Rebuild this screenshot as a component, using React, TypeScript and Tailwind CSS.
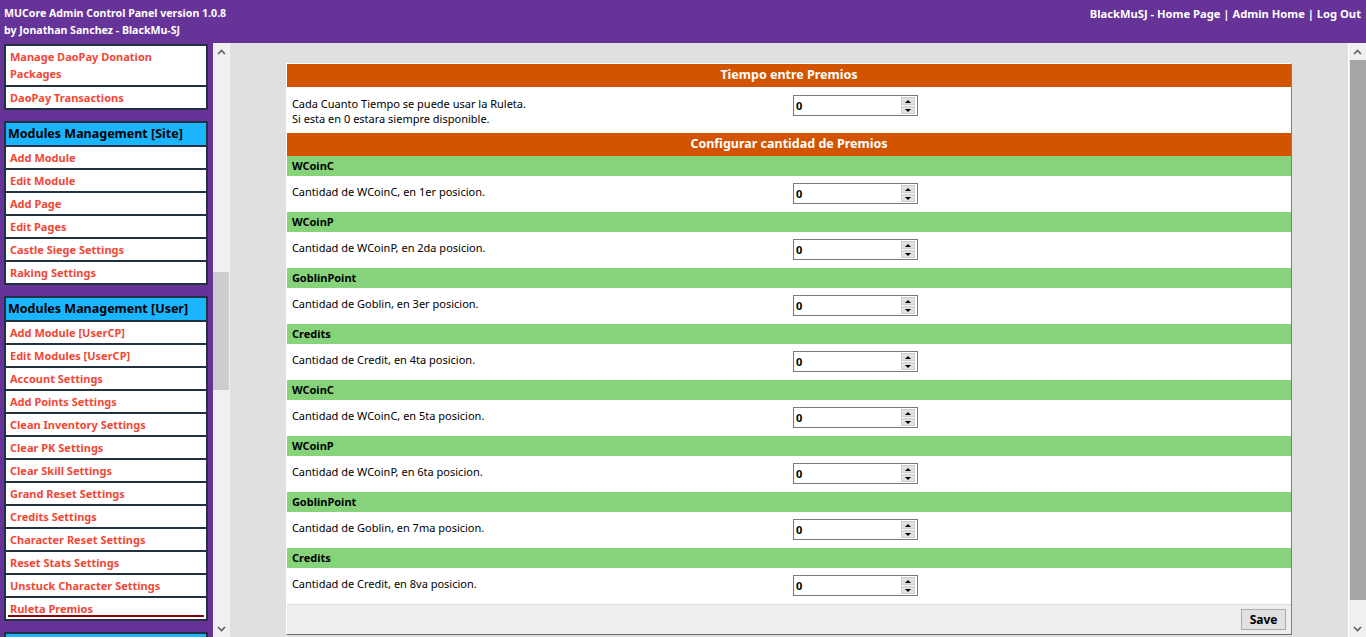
import React from "react";

const F = "font-['Noto_Sans',sans-serif]";

function Spinner() {
  return (
    <div className="w-[125px] h-[21px] border border-[#7a7a7a] bg-white flex items-center justify-between pl-[2px] pr-[2px]">
      <span className="text-[11px] font-bold text-black leading-none">0</span>
      <div className="flex flex-col gap-[1px] w-[14px] h-[17px]">
        <div className="flex-1 bg-[#e1e1e1] border border-[#cfcfcf] flex items-center justify-center">
          <div className="w-0 h-0 border-l-[3px] border-r-[3px] border-b-[3px] border-l-transparent border-r-transparent border-b-black" />
        </div>
        <div className="flex-1 bg-[#e1e1e1] border border-[#cfcfcf] flex items-center justify-center">
          <div className="w-0 h-0 border-l-[3px] border-r-[3px] border-t-[3px] border-l-transparent border-r-transparent border-t-black" />
        </div>
      </div>
    </div>
  );
}

function OrangeHead({ children }: { children: React.ReactNode }) {
  return (
    <div className="h-[23px] bg-[#d35400] text-white font-bold text-[12.5px] flex items-center justify-center">
      {children}
    </div>
  );
}

function Row({ label, tall }: { label: React.ReactNode; tall?: boolean }) {
  return (
    <div className={`bg-white flex items-start ${tall ? "h-[46px] pt-[8px]" : "h-[36px] pt-[7px]"}`}>
      <div className="w-1/2 pl-[5px] pt-[1px] text-[11px] leading-[15px] text-black">{label}</div>
      <div className="w-1/2 pl-[4px]">
        <Spinner />
      </div>
    </div>
  );
}

const prizes = [
  ["WCoinC", "Cantidad de WCoinC, en 1er posicion."],
  ["WCoinP", "Cantidad de WCoinP, en 2da posicion."],
  ["GoblinPoint", "Cantidad de Goblin, en 3er posicion."],
  ["Credits", "Cantidad de Credit, en 4ta posicion."],
  ["WCoinC", "Cantidad de WCoinC, en 5ta posicion."],
  ["WCoinP", "Cantidad de WCoinP, en 6ta posicion."],
  ["GoblinPoint", "Cantidad de Goblin, en 7ma posicion."],
  ["Credits", "Cantidad de Credit, en 8va posicion."],
];

const siteItems = ["Add Module", "Edit Module", "Add Page", "Edit Pages", "Castle Siege Settings", "Raking Settings"];
const userItems = [
  "Add Module [UserCP]",
  "Edit Modules [UserCP]",
  "Account Settings",
  "Add Points Settings",
  "Clean Inventory Settings",
  "Clear PK Settings",
  "Clear Skill Settings",
  "Grand Reset Settings",
  "Credits Settings",
  "Character Reset Settings",
  "Reset Stats Settings",
  "Unstuck Character Settings",
];

function Item({ children, extra }: { children: React.ReactNode; extra?: boolean }) {
  return (
    <div className={`bg-white px-[4px] pt-[2px] ${extra ? "pb-[3px]" : "pb-[2px]"} text-[11px] leading-[17px] font-bold text-[#ef4836]`}>
      {children}
    </div>
  );
}

function BoxHead({ children }: { children?: React.ReactNode }) {
  return (
    <div className="h-[22px] bg-[#19b5fe] px-[2px] flex items-center text-[12.5px] font-bold text-black">{children}</div>
  );
}

function ScrollArrow({ up }: { up?: boolean }) {
  return (
    <div className="h-[17px] flex items-center justify-center">
      <svg width="9" height="6" viewBox="0 0 9 6">
        <path d={up ? "M1 5 L4.5 1.5 L8 5" : "M1 1 L4.5 4.5 L8 1"} fill="none" stroke="#606060" strokeWidth="1.6" />
      </svg>
    </div>
  );
}

export default function App() {
  return (
    <div className={`w-[1366px] h-[637px] overflow-hidden flex flex-col ${F}`}>
      <div className="h-[43px] bg-[#663399] flex justify-between text-white font-bold leading-[17px] pl-[4px] pr-[5px] pt-[5px] shrink-0">
        <div className="text-[10.6px]">
          <div>MUCore Admin Control Panel version 1.0.8</div>
          <div>by Jonathan Sanchez - BlackMu-SJ</div>
        </div>
        <div className="text-[11.2px]">BlackMuSJ - Home Page | Admin Home | Log Out</div>
      </div>
      <div className="flex-1 flex min-h-0">
        <div className="w-[213px] bg-[#663399] overflow-hidden pl-[4px] pr-[5px] pt-[1px] shrink-0">
          <div className="border-2 border-[#22313f] bg-[#22313f] flex flex-col gap-[2px]">
            <Item extra>
              Manage DaoPay Donation
              <br />
              Packages
            </Item>
            <Item>DaoPay Transactions</Item>
          </div>
          <div className="mt-[11px] border-2 border-[#22313f] bg-[#22313f] flex flex-col gap-[2px]">
            <BoxHead>Modules Management [Site]</BoxHead>
            {siteItems.map((s) => (
              <Item key={s}>{s}</Item>
            ))}
          </div>
          <div className="mt-[11px] border-2 border-[#22313f] bg-[#22313f] flex flex-col gap-[2px]">
            <BoxHead>Modules Management [User]</BoxHead>
            {userItems.map((s) => (
              <Item key={s}>{s}</Item>
            ))}
            <div className="bg-white px-[2px] pt-[2px] h-[21px] text-[11px] leading-[17px] font-bold text-[#ef4836] flex flex-col">
              <span className="px-[2px] h-[15px] leading-[17px] overflow-hidden">Ruleta Premios</span>
              <div className="h-[2px] bg-[#8b0000]" />
            </div>
          </div>
          <div className="mt-[11px] border-2 border-[#22313f] bg-[#22313f]">
            <BoxHead />
          </div>
        </div>
        <div className="w-[17px] bg-[#f0f0f0] flex flex-col shrink-0">
          <ScrollArrow up />
          <div className="flex-1 relative">
            <div className="absolute left-0 right-[1px] top-[212px] h-[118px] bg-[#cdcdcd]" />
          </div>
          <ScrollArrow />
        </div>
        <div className="flex-1 bg-[#e0e0e0] pt-[20px] overflow-hidden">
          <div className="w-[90%] mx-auto border-t border-l border-white border-r border-r-[#808080] border-b border-b-[#6a6a6a] bg-white">
            <OrangeHead>Tiempo entre Premios</OrangeHead>
            <Row
              tall
              label={
                <>
                  Cada Cuanto Tiempo se puede usar la Ruleta.
                  <br />
                  Si esta en 0 estara siempre disponible.
                </>
              }
            />
            <OrangeHead>Configurar cantidad de Premios</OrangeHead>
            {prizes.map(([h, l], i) => (
              <div key={i}>
                <div className="h-[20px] bg-[#87d37c] pl-[5px] flex items-center text-[11px] font-bold text-black">{h}</div>
                <Row label={l} />
              </div>
            ))}
            <div className="h-[1px] bg-[#dcdcdc]" />
            <div className="h-[29px] bg-[#eeeeee] flex items-center justify-end pr-[5px]">
              <button className="w-[45px] h-[21px] bg-[#e1e1e1] border border-[#adadad] text-[12px] font-bold text-black leading-none">
                Save
              </button>
            </div>
          </div>
        </div>
        <div className="w-[18px] bg-[#f0f0f0] flex flex-col shrink-0 border-l border-white">
          <ScrollArrow up />
          <div className="flex-1 relative">
            <div className="absolute left-[1px] right-0 top-0 h-[540px] bg-[#a6a6a6]" />
          </div>
          <ScrollArrow />
        </div>
      </div>
    </div>
  );
}
